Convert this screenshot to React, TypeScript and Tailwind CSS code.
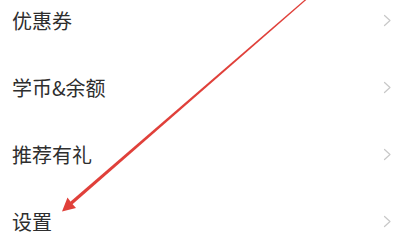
import React from "react";

const items = ["优惠券", "学币&余额", "推荐有礼", "设置"];

const Chevron = () => (
  <svg width="9" height="13" viewBox="0 0 9 13" fill="none" className="mr-[21px]">
    <path d="M1.5 1.5l5.5 5-5.5 5" stroke="#c8c8c8" strokeWidth="1.2" strokeLinecap="round" strokeLinejoin="round" />
  </svg>
);

export default function App() {
  return (
    <div
      className="relative w-[413px] h-[239px] overflow-hidden bg-white"
      style={{ fontFamily: '"Noto Sans CJK SC", "Noto Sans", sans-serif' }}
    >
      <div className="flex flex-col -mt-[13px]">
        {items.map((label) => (
          <div key={label} className="flex h-[67px] items-center justify-between pl-3">
            <span className="text-[20px] text-[#2e2e2e]">{label}</span>
            <Chevron />
          </div>
        ))}
      </div>

      {/* red annotation arrow */}
      <svg className="absolute left-0 top-0 pointer-events-none" width="413" height="239" viewBox="0 0 413 239">
        <polygon points="311.4,-4.5 310.6,-5.4 70,202 72.2,204.5" fill="#e0403a" />
        <polygon points="62,211.5 76,208 71.5,203 67.5,197.5" fill="#e0403a" />
      </svg>
    </div>
  );
}
